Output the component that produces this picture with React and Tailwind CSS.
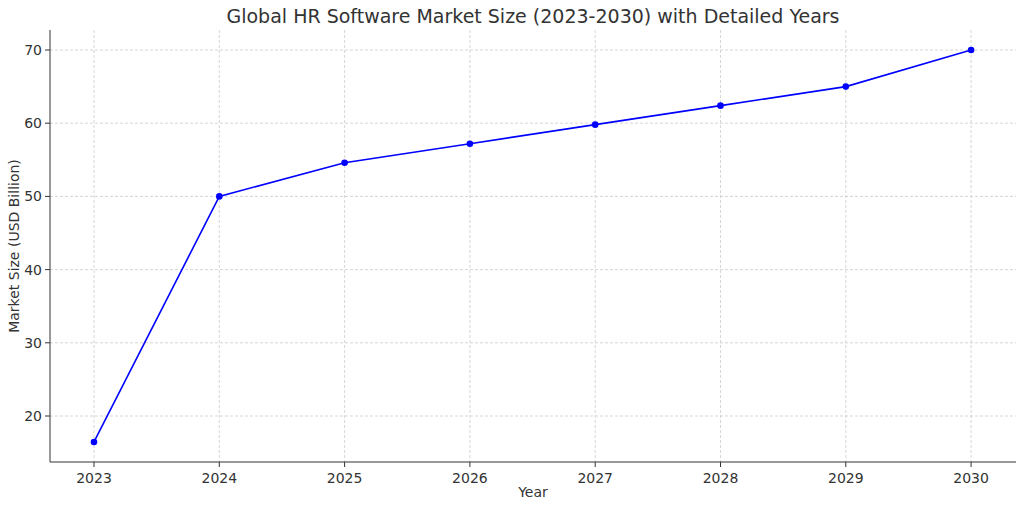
import React from "react";

const data = [16.45, 50, 54.6, 57.2, 59.8, 62.4, 65, 70];
const years = [2023, 2024, 2025, 2026, 2027, 2028, 2029, 2030];
const xOf = (i) => 94 + i * 125.3;
const yOf = (v) => 416 - (v - 20) * 7.32;

export default function App() {
  const pts = data.map((v, i) => `${xOf(i)},${yOf(v)}`).join(" ");
  return (
    <div className="w-[1024px] h-[508px] bg-white" style={{ fontFamily: "'DejaVu Sans', sans-serif" }}>
      <svg width="1024" height="508" className="block">
        <text x="533" y="23" textAnchor="middle" fontSize="19" fill="#333">
          Global HR Software Market Size (2023-2030) with Detailed Years
        </text>
        {[20, 30, 40, 50, 60, 70].map((v) => (
          <g key={v}>
            <line x1="50" x2="1016" y1={yOf(v)} y2={yOf(v)} stroke="#ccc" strokeDasharray="3 2" strokeWidth="0.8" />
            <line x1="45" x2="50" y1={yOf(v)} y2={yOf(v)} stroke="#333" />
            <text x="42" y={yOf(v) + 5} textAnchor="end" fontSize="14" fill="#333">{v}</text>
          </g>
        ))}
        {years.map((y, i) => (
          <g key={y}>
            <line x1={xOf(i)} x2={xOf(i)} y1="30" y2="462" stroke="#ccc" strokeDasharray="3 2" strokeWidth="0.8" />
            <line x1={xOf(i)} x2={xOf(i)} y1="462" y2="467" stroke="#333" />
            <text x={xOf(i)} y="483" textAnchor="middle" fontSize="14" fill="#333">{y}</text>
          </g>
        ))}
        <line x1="50" x2="50" y1="30" y2="462" stroke="#333" />
        <line x1="50" x2="1016" y1="462" y2="462" stroke="#333" />
        <polyline points={pts} fill="none" stroke="#0000ff" strokeWidth="1.6" />
        {data.map((v, i) => (
          <circle key={i} cx={xOf(i)} cy={yOf(v)} r="3.3" fill="#0000ff" />
        ))}
        <text x="533" y="497" textAnchor="middle" fontSize="14" fill="#333">Year</text>
        <text transform="translate(19 246) rotate(-90)" textAnchor="middle" fontSize="14" fill="#333">
          Market Size (USD Billion)
        </text>
      </svg>
    </div>
  );
}
